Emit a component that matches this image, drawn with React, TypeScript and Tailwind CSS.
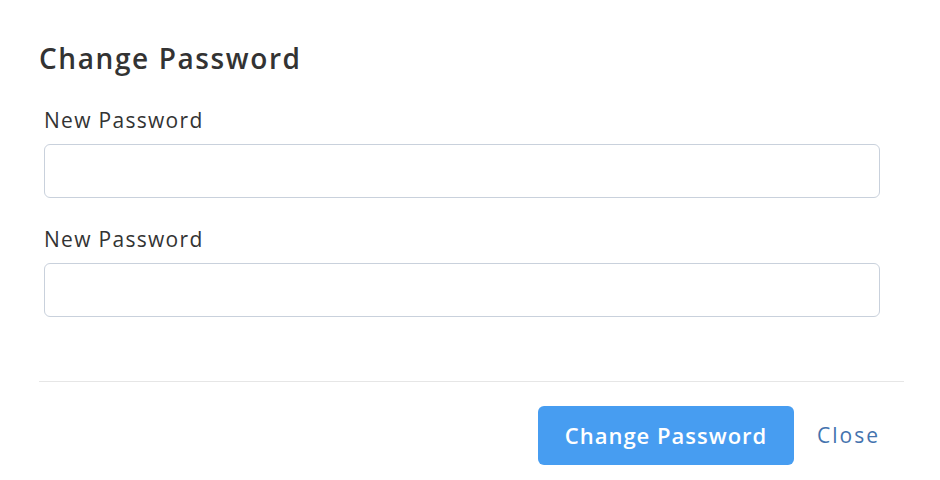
import React from 'react';

const font = { fontFamily: '"Open Sans", "Noto Sans", sans-serif' };

export default function App() {
  return (
    <div className="w-[940px] h-[480px] bg-white" style={font}>
      <div className="ml-[39px] w-[865px] pt-[40px]">
        <h2 className="text-[28px] leading-[36px] font-semibold tracking-[1.6px] text-[#333333]">Change Password</h2>

        <form className="pl-[5px] pr-[24px] mt-[30px] flex flex-col">
          <label className="text-[21px] leading-[28px] tracking-[1.3px] text-[#333333]">New Password</label>
          <input
            type="password"
            className="mt-[10px] h-[54px] w-full rounded-[6px] border border-[#c9d1dc] px-3 outline-none"
          />
          <label className="mt-[27px] text-[21px] leading-[28px] tracking-[1.3px] text-[#333333]">New Password</label>
          <input
            type="password"
            className="mt-[10px] h-[54px] w-full rounded-[6px] border border-[#c9d1dc] px-3 outline-none"
          />
        </form>

        <div className="mt-[64px] border-t border-[#e6e6e6]" />

        <div className="flex items-center justify-end gap-[23px] pr-[24px] pt-[24px]">
          <button className="h-[59px] w-[256px] rounded-[6px] bg-[#479df1] text-[22px] font-semibold tracking-[1px] text-white">
            Change Password
          </button>
          <button className="text-[21px] tracking-[2px] text-[#4473ae]">Close</button>
        </div>
      </div>
    </div>
  );
}
